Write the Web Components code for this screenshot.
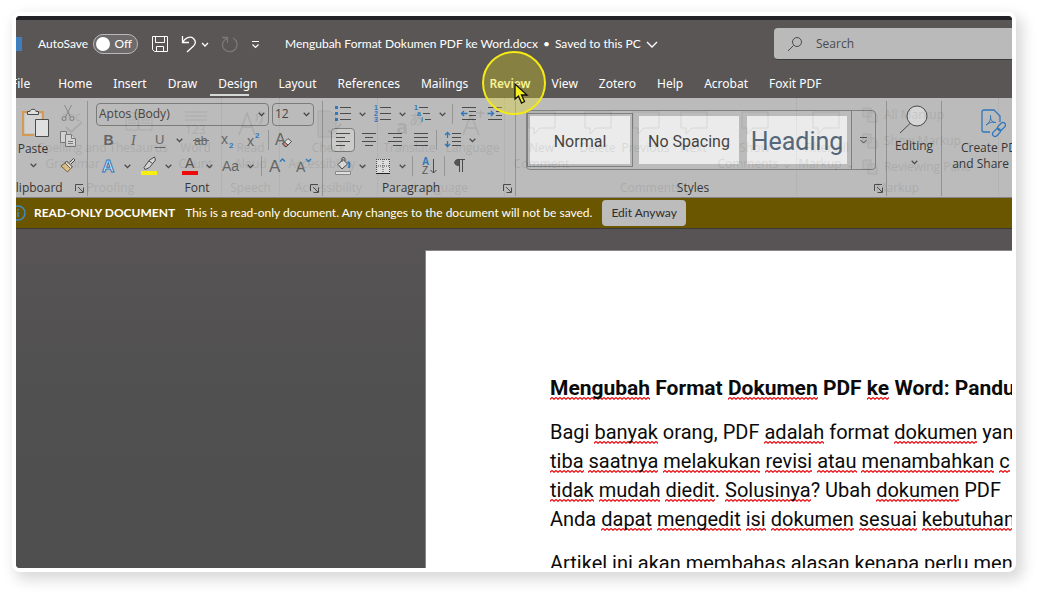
<!DOCTYPE html>
<html lang="id">
<head>
<meta charset="utf-8">
<title>Mengubah Format Dokumen PDF ke Word.docx</title>
<style>
  body {
    margin: 0;
    background: #fff;
    font-family: "Open Sans", "Noto Sans", sans-serif;
    font-size: 12px;
    line-height: 16px;
  }
</style>
</head>
<body>
<word-window></word-window>

<script>
// ---------- icons ----------
const BLUE = "#2f78bd";
const INK = "#4c4b4b";

const svg = (w, h, body) =>
  `<svg width="${w}" height="${h}" viewBox="0 0 ${w} ${h}" fill="none" stroke="${INK}" aria-hidden="true">${body}</svg>`;

const lines = (list) =>
  `<path d="${list.map(([x1, x2, y]) => `M${x1} ${y}H${x2}`).join("")}"/>`;

const letter = (x, y, size, fill, text, extra = "") =>
  `<text x="${x}" y="${y}" font-size="${size}" fill="${fill}" stroke="none" ${extra}>${text}</text>`;

const icons = {
  caret: svg(7, 5, `<path d="M.7 .8L3.5 3.6L6.3 .8" stroke-width="1.3"/>`),
  paste: svg(36, 34, `<g transform="translate(6 2)">
    <path d="M7 5H2V28H13M17 5H22V12" stroke="#d59a52" stroke-width="2"/>
    <path d="M3.500 6.500H20.500V26.500H3.500Z" fill="#d2d2d2" stroke="none"/>
    <path d="M6.500 7.500V4.500H9C9 1.500 15 1.500 15 4.500H17.500V7.500Z" fill="#e0e0e0"/>
    <path d="M14.500 12.500H27.500V29.500H14.500Z" fill="#e0e0e0"/></g>`),
  cut: svg(20, 20, `<g stroke="#888"><path d="M6.500 2L12.500 14M13.500 2L7.500 14"/><circle cx="6" cy="15.500" r="2"/><circle cx="14" cy="15.500" r="2"/></g>`),
  copy: svg(20, 20, `<g stroke="#7a7a7a" fill="#d2d2d2"><path d="M2.500 2.500H8.500V13.500H2.500Z"/><path d="M7.500 5.500H13.500L17.500 9.500V17.500H7.500Z"/><path d="M13.500 5.500V9.500H17.500"/><path d="M10 12.500H15M10 14.500H15" /></g>`),
  painter: svg(20, 20, `<path d="M11.500 7.500L15.500 3.500L17 5L13 9" fill="#ddd"/><path d="M8.500 6L14.500 12L12.500 13.500L7 8Z" fill="#ddd"/><path d="M7 8L3 11L9.500 17L12.500 13.500Z" fill="#dcc08c" stroke="#7d6338"/>`),
  bold: svg(22, 22, letter(6.5, 16, 14, "#666", "B", 'font-weight="700"')),
  italic: svg(22, 22, letter(8, 16, 14, "#666", "I", 'font-style="italic" font-family="Liberation Serif, serif"')),
  underline: svg(22, 22, letter(6, 15, 13, "#666", "U") + `<path d="M5.500 18.500H16.500" stroke="#666"/>`),
  strike: svg(22, 22, letter(4, 16, 12, "#666", "ab") + `<path d="M3 11.500H19" stroke="#666"/>`),
  sub: svg(22, 22, letter(5, 15, 14, "#666", "x") + letter(13, 19, 8, BLUE, "2", 'font-weight="700"')),
  sup: svg(22, 22, letter(5, 17, 14, "#666", "x") + letter(13, 9, 8, BLUE, "2", 'font-weight="700"')),
  clear: svg(22, 22, letter(1, 16, 16, "#666", "A") + `<path d="M8.500 15L14 9.500L17.500 12.500L12 18Z" fill="#e2e2e2"/><path d="M8.500 15L10.500 13L14 16L12 18Z" fill="#c88"/>`),
  effects: svg(22, 22, `<text x="5" y="17" font-size="17" font-weight="700" fill="#dfe6ec" stroke="${BLUE}">A</text>`),
  highlight: svg(22, 22, `<path d="M6 12.500L11.500 5L16.500 2L17.500 5L11.500 12.500L7 14.500Z" fill="#d5d5d5"/><path d="M11 6L14.500 8.500"/><path d="M3 16H19V20H3Z" fill="#f8ee10" stroke="none"/>`),
  color: svg(22, 22, letter(6, 13, 14, "#555", "A") + `<path d="M3 16H19V20H3Z" fill="#ee0a0a" stroke="none"/>`),
  changeCase: svg(22, 22, letter(2, 16, 14, "#666", "Aa")),
  grow: svg(22, 22, letter(2, 17, 17, "#666", "A") + `<path d="M13 6.500L15.500 4L18 6.500" stroke="${BLUE}" stroke-width="1.400"/>`),
  shrink: svg(22, 22, letter(3, 17, 14, "#666", "A") + `<path d="M13 4L15.500 6.500L18 4" stroke="${BLUE}" stroke-width="1.400"/>`),
  bullets: svg(22, 22, `<path d="M3 3H6V6H3ZM3 9H6V12H3ZM3 15H6V18H3Z" fill="${BLUE}" stroke="none"/>` + lines([[8, 19, 4.5], [8, 19, 10.5], [8, 19, 16.5]])),
  numbers: svg(22, 22, letter(2, 7, 7, BLUE, "1", 'font-weight="700"') + letter(2, 13, 7, BLUE, "2", 'font-weight="700"') + letter(2, 19, 7, BLUE, "3", 'font-weight="700"') + lines([[8, 19, 4.5], [8, 19, 10.5], [8, 19, 16.5]])),
  multilevel: svg(22, 22, letter(2, 7, 7, BLUE, "1", 'font-weight="700"') + letter(5, 13, 7, BLUE, "a", 'font-weight="700"') + letter(9, 19, 7, BLUE, "i", 'font-weight="700"') + lines([[7, 16, 4.5], [11, 18, 10.5], [13, 19, 16.5]])),
  outdent: svg(22, 22, lines([[4, 18, 4.5], [11, 18, 8.5], [11, 18, 12.5], [4, 18, 16.5]]) + `<path d="M9.500 10.500H3.500M6 8L3.500 10.500L6 13" stroke="${BLUE}" stroke-width="1.300"/>`),
  indent: svg(22, 22, lines([[4, 18, 4.5], [12, 18, 8.5], [12, 18, 12.5], [4, 18, 16.5]]) + `<path d="M3.500 10.500H9.500M7 8L9.500 10.500L7 13" stroke="${BLUE}" stroke-width="1.300"/>`),
  left: svg(22, 22, lines([[4, 18, 4.5], [4, 13, 8.5], [4, 18, 12.5], [4, 13, 16.5]])),
  center: svg(22, 22, lines([[4, 18, 4.5], [7, 15, 8.5], [4, 18, 12.5], [7, 15, 16.5]])),
  right: svg(22, 22, lines([[4, 18, 4.5], [9, 18, 8.5], [4, 18, 12.5], [9, 18, 16.5]])),
  justify: svg(22, 22, lines([[4, 18, 4.5], [4, 18, 8.5], [4, 18, 12.5], [4, 18, 16.5]])),
  spacing: svg(22, 22, lines([[10, 19, 4.5], [10, 19, 8.5], [10, 19, 12.5], [10, 19, 16.5]]) + `<path d="M5.500 4V9M5.500 12V17M3 6L5.500 3.500L8 6M3 15L5.500 17.500L8 15" stroke="${BLUE}" stroke-width="1.300"/>`),
  shading: svg(22, 22, `<path d="M6 9.500L11 4.500L15.500 9L10 14Z" fill="#ddd"/><path d="M10 7V3.500C10 2 13 2 13 4V6"/><path d="M16 7C18 8 17.500 11 17 13" stroke="${BLUE}" stroke-width="2"/><path d="M3.500 16.500H18.500V19.500H3.500Z" fill="#dedede" stroke="#888"/>`),
  borders: svg(22, 22, `<path d="M4 4H18V18H4Z" fill="#dcdcdc" stroke="none"/><path d="M4 4.500H18M4.500 4V18M17.500 4V18M11 4V18M4 11H18" stroke-dasharray="1 1"/><path d="M4 18.500H18" stroke="#222"/>`),
  sort: svg(22, 22, letter(4, 10, 10, BLUE, "A", 'font-weight="700"') + letter(4, 19, 10, "#555", "Z") + `<path d="M15.500 4V18M12.500 15L15.500 18L18.500 15"/>`),
  pilcrow: svg(22, 22, `<path d="M9.500 17V4.500M12.500 17V4.500M7 4.500H15"/><path d="M9.500 4.500C3 4 3 11 9.500 10.500Z" fill="#555"/>`),
  launcher: svg(9, 9, `<path d="M.5 7V.5H8M3 3L8 8M8.500 3.500V8.500H3.500"/>`),
  more: svg(9, 7, `<path d="M1 .5H8M1.500 3L4.500 6L7.500 3"/>`),
  magnifier: svg(30, 32, `<circle cx="18" cy="12" r="10" fill="#d6d6d6"/><path d="M11 19.500L1 29"/>`),
  acrobat: svg(28, 30, `<g stroke="${BLUE}" stroke-width="1.300"><path d="M12 24H6Q4 24 4 22V4Q4 2 6 2H16L22 8V14"/><path d="M8 17C12 15 13 10 12.500 7.500C12 12 15 15 18 14.500C14 13.500 11 14.500 8 17Z" stroke-width="1"/><rect x="19" y="16" width="9" height="5" rx="2.500" transform="rotate(-45 23.500 18.500)"/><rect x="14" y="22" width="9" height="5" rx="2.500" transform="rotate(-45 18.500 24.500)"/></g>`),
  save: svg(18, 18, `<g stroke="#fff"><path d="M1.500 1.500H16.500V16.500H3.500L1.500 14.500Z"/><path d="M4.500 1.500V7.500H13.500V1.500M5.500 16.500V11.500H12.500V16.500"/></g>`),
  undo: svg(16, 18, `<path d="M1.500 1V7.500H8M1.500 7.500C4 3 9 .5 12.500 3.500C15.500 6.500 14.500 9 12.500 11L6 17" stroke="#fff" stroke-width="1.300"/>`),
  redo: svg(18, 18, `<path d="M1 2.500H6.500V8M6 3.500C1 6 0 11 3.500 14.500C7 18 12 17 14.500 14C17.500 10 16 5 12 3" stroke="#77787b" stroke-width="1.300"/>`),
  whiteCaret: svg(8, 5, `<path d="M1 1L4 4L7 1" stroke="#fff" stroke-width="1.300"/>`),
  titleCaret: svg(12, 7, `<path d="M1 1L6 6L11 1" stroke="#fff" stroke-width="1.300"/>`),
  customize: svg(9, 9, `<path d="M1 1.500H8M1.500 4.500L4.500 7.500L7.500 4.500" stroke="#fff" stroke-width="1.200"/>`),
  search: svg(16, 16, `<circle cx="10" cy="6" r="4.500"/><path d="M6.500 9.500L1 15"/>`),
  info: svg(16, 16, `<circle cx="8" cy="8" r="7" stroke="#3f8bd0" stroke-width="1.400"/><path d="M8 7V12M8 4V5.500" stroke="#3f8bd0" stroke-width="1.600"/>`),
  pointer: svg(15, 22, `<path d="M1 1V16L4.500 13L7.500 20L10.500 18.500L7.500 12H13Z" fill="#f6ef1d" stroke="#111" stroke-width="1.300"/>`),
  abc: svg(26, 26, letter(1, 11, 12, "#000", "abc") + `<path d="M6 17L11 22L22 12" stroke="#000" stroke-width="2"/>`),
  book: svg(28, 26, `<path d="M1 3H13V20H1ZM14 3H27V20H14ZM3 7H11M3 10H11M3 13H11M16 7H25M16 10H25M16 13H25" stroke="#000"/>`),
  count: svg(28, 26, `<path d="M3 2H25M3 6H25M3 10H25" stroke="#000"/>` + letter(3, 24, 12, "#000", "123")),
  aloud: svg(28, 26, `<path d="M2 25L10 3L18 25M5 17H15M19 4Q22 7 19 11M23 1Q28 7 23 14" stroke="#000" stroke-width="1.400"/>`),
  language: svg(28, 26, `<path d="M4 25L12 5L20 25M7 18H17M17 3H26M21.500 0V8" stroke="#000" stroke-width="1.400"/>`),
  check: svg(26, 28, `<path d="M2 1H14L20 7V27H2Z" fill="#000" fill-opacity=".3" stroke="#000"/><path d="M12 20L16 24L25 14" stroke="#000" stroke-width="2"/>`),
  translate: svg(30, 28, letter(1, 24, 20, "#000", "a", 'font-weight="700"') + letter(14, 14, 14, "#000", "あ", 'font-family="Noto Sans CJK JP"')),
  bubble: svg(30, 26, `<path d="M2 2H28V18H13L7 24V18H2Z" stroke="#000"/>`),
  page: svg(16, 16, `<path d="M1 1H9V10H1ZM6 5H12L15 8V15H6Z" stroke="#000" fill="#000" fill-opacity=".2"/>`),
};

// ---------- one icon ----------
class UiIcon extends HTMLElement {
  connectedCallback() {
    this.attachShadow({ mode: "open" }).innerHTML = `
      <style>
        :host { display: inline-flex; flex: none; }
        svg { display: block; }
      </style>
      ${icons[this.getAttribute("name")]}
    `;
  }
}
customElements.define("ui-icon", UiIcon);

// ---------- small ribbon button, with an optional menu arrow ----------
class RibbonTool extends HTMLElement {
  connectedCallback() {
    const label = this.getAttribute("label");
    const menu = this.hasAttribute("menu")
      ? `<button class="menu" aria-label="${label} options"><ui-icon name="caret"></ui-icon></button>`
      : "";
    this.attachShadow({ mode: "open" }).innerHTML = `
      <style>
        :host { display: inline-flex; flex: none; align-items: center; }
        button {
          display: flex;
          align-items: center;
          justify-content: center;
          box-sizing: border-box;
          width: 26px;
          height: 24px;
          padding: 0;
          border: 1px solid transparent;
          border-radius: 4px;
          background: none;
        }
        .menu { width: 14px; padding-right: 2px; }
        :host([pressed]) button { width: 24px; margin: 0 1px; background: #cbcbc9; border-color: #7e7e7e; }
      </style>
      <button aria-label="${label}"><ui-icon name="${this.getAttribute("icon")}"></ui-icon></button>
      ${menu}
    `;
  }
}
customElements.define("ribbon-tool", RibbonTool);

// ---------- tall ribbon button: icon over its text ----------
class RibbonBigTool extends HTMLElement {
  connectedCallback() {
    this.attachShadow({ mode: "open" }).innerHTML = `
      <style>
        :host { display: block; flex: none; }
        button {
          display: flex;
          flex-direction: column;
          align-items: center;
          gap: 2px;
          width: 100%;
          padding: 0;
          border: 0;
          background: none;
          color: #363636;
          font: inherit;
          white-space: nowrap;
        }
        .caret { padding-top: 4px; }
      </style>
      <button>
        <ui-icon name="${this.getAttribute("icon")}"></ui-icon>
        <span><slot></slot></span>
        ${this.hasAttribute("menu") ? '<ui-icon class="caret" name="caret"></ui-icon>' : ""}
      </button>
    `;
  }
}
customElements.define("ribbon-big-tool", RibbonBigTool);

// ---------- group of tools with its caption ----------
class RibbonGroup extends HTMLElement {
  connectedCallback() {
    const label = this.getAttribute("label") || "";
    const launcher = this.hasAttribute("launcher")
      ? `<button aria-label="${label} settings"><ui-icon name="launcher"></ui-icon></button>`
      : "";
    this.attachShadow({ mode: "open" }).innerHTML = `
      <style>
        :host {
          display: flex;
          flex-direction: column;
          flex: none;
          box-sizing: border-box;
          border-right: 1px solid #929292;
        }
        :host([last]) { border-right: 0; }
        .tools { flex: 1; }
        footer { display: flex; height: 16px; align-items: center; }
        footer span { flex: 1; text-align: center; }
        footer button { width: 16px; padding: 0; border: 0; background: none; }
      </style>
      <div class="tools"><slot></slot></div>
      <footer><span>${label}</span>${launcher}</footer>
    `;
  }
}
customElements.define("ribbon-group", RibbonGroup);

// ---------- title bar ----------
class TitleBar extends HTMLElement {
  connectedCallback() {
    this.attachShadow({ mode: "open" }).innerHTML = `
      <style>
        :host {
          display: grid;
          grid-template-columns: 758px 1fr;
          align-items: center;
          height: 48px;
          border-top: 4px solid #222126;
          color: #fff;
        }
        .left { display: flex; align-items: center; font-family: Lato, "Open Sans", sans-serif; }
        .app { width: 6px; height: 14px; margin-right: 16px; background: #3f7fc0; }
        .switch { display: flex; align-items: center; justify-content: space-between; width: 100px; margin-right: 13px; }
        .track {
          display: flex;
          align-items: center;
          justify-content: space-between;
          box-sizing: border-box;
          width: 45px;
          height: 20px;
          padding: 0 5px 0 2px;
          border: 1px solid #b9b9b9;
          border-radius: 10px;
          background: #6c6a6a;
        }
        .track input {
          appearance: none;
          width: 14px;
          height: 14px;
          margin: 0;
          border-radius: 50%;
          background: #fff;
        }
        button { display: flex; padding: 0; border: 0; background: none; color: inherit; font: inherit; }
        .quick { display: flex; align-items: center; gap: 12px; width: 134px; }
        .undo { display: flex; align-items: center; gap: 4px; }
        .name { display: flex; align-items: center; gap: 5px; white-space: nowrap; }
        .search {
          display: flex;
          align-items: center;
          gap: 13px;
          height: 32px;
          padding-left: 13px;
          border-radius: 4px 0 0 4px;
          border-bottom: 1px solid #3c3c3c;
          box-sizing: border-box;
          background: #bababa;
        }
        .search input { flex: 1; min-width: 0; border: 0; padding: 0; outline: 0; background: none; font: inherit; color: #444; }
        .search input::placeholder { color: #4b4b4b; opacity: 1; }
      </style>
      <div class="left">
        <span class="app"></span>
        <label class="switch">AutoSave
          <span class="track"><input type="checkbox" role="switch"><span>Off</span></span>
        </label>
        <div class="quick">
          <button aria-label="Save"><ui-icon name="save"></ui-icon></button>
          <div class="undo">
            <button aria-label="Undo"><ui-icon name="undo"></ui-icon></button>
            <button aria-label="Undo list"><ui-icon name="whiteCaret"></ui-icon></button>
          </div>
          <button aria-label="Redo"><ui-icon name="redo"></ui-icon></button>
          <button aria-label="Customize"><ui-icon name="customize"></ui-icon></button>
        </div>
        <button class="name"><span>Mengubah Format Dokumen PDF ke Word.docx</span><span>•</span><span>Saved to this PC</span><ui-icon name="titleCaret"></ui-icon></button>
      </div>
      <label class="search">
        <ui-icon name="search"></ui-icon>
        <input type="text" placeholder="Search" aria-label="Search">
      </label>
    `;
  }
}
customElements.define("title-bar", TitleBar);

// ---------- tab row ----------
class RibbonTabs extends HTMLElement {
  connectedCallback() {
    const names = this.getAttribute("names").split("|");
    const active = this.getAttribute("active");
    const hover = this.getAttribute("hover");
    this.attachShadow({ mode: "open" }).innerHTML = `
      <style>
        :host { display: block; font-family: "Noto Sans", sans-serif; }
        nav { display: flex; gap: 21px; box-sizing: border-box; height: 30px; padding-top: 2px; margin-left: -5px; align-items: center; }
        a { position: relative; color: #fff; text-decoration: none; white-space: nowrap; }
        a:first-child { margin-right: 7px; }
        .active::after {
          content: "";
          position: absolute;
          left: -8px;
          right: 8px;
          bottom: -4px;
          height: 2px;
          background: #d5d9d8;
        }
        .hover { color: #fbf6c8; font-weight: 600; }
        .ring {
          position: absolute;
          left: 50%;
          top: 50%;
          width: 60px;
          height: 60px;
          margin: -33px 0 0 -28px;
          border: 2px solid #f3ea17;
          border-radius: 50%;
          background: rgba(240, 228, 20, .3);
          z-index: 2;
        }
        .ring ui-icon { position: absolute; left: 30px; top: 30px; }
      </style>
      <nav>
        ${names.map((n) => `<a href="#" class="${n === active ? "active" : n === hover ? "hover" : ""}">${n}${
          n === hover ? '<span class="ring"><ui-icon name="pointer"></ui-icon></span>' : ""}</a>`).join("")}
      </nav>
    `;
  }
}
customElements.define("ribbon-tabs", RibbonTabs);

// ---------- Review ribbon fading out on top of the Home one ----------
class FadingRibbon extends HTMLElement {
  connectedCallback() {
    const item = (w, icon, text) =>
      `<div class="item" style="width:${w}px"><ui-icon name="${icon}"></ui-icon><span>${text}</span></div>`;
    const group = (w, label, items) =>
      `<section style="width:${w}px"><div class="items">${items}</div><footer>${label}</footer></section>`;
    this.attachShadow({ mode: "open" }).innerHTML = `
      <style>
        :host {
          display: flex;
          position: absolute;
          inset: 0;
          padding-bottom: 1px;
          opacity: .08;
          color: #000;
          pointer-events: none;
          overflow: hidden;
        }
        section { display: flex; flex-direction: column; flex: none; box-sizing: border-box; border-right: 1px dotted #000; }
        .items { display: flex; flex: 1; justify-content: center; padding-top: 12px; }
        .item { display: flex; flex-direction: column; align-items: center; gap: 2px; text-align: center; white-space: nowrap; }
        .item ui-icon { height: 28px; }
        footer { height: 16px; text-align: center; }
        .list { display: flex; flex-direction: column; gap: 10px; padding: 0 24px 0 6px; margin-top: -3px; white-space: nowrap; }
        .list div { display: flex; gap: 6px; }
      </style>
      ${group(222, "Proofing",
        `<div class="item" style="width:38px"></div>` +
        item(66, "abc", "Spelling and<br>Grammar") + item(66, "book", "Thesaurus") + item(48, "count", "Word<br>Count"))}
      ${group(58, "Speech", item(58, "aloud", "Read<br>Aloud"))}
      ${group(98, "Accessibility", item(98, "check", "Check<br>Accessibility ⌄"))}
      ${group(127, "Language", item(63, "translate", "Translate") + item(63, "language", "Language"))}
      ${group(292, "Comments",
        item(64, "bubble", "New<br>Comment") + item(48, "bubble", "Delete") + item(48, "bubble", "Previous") +
        item(48, "bubble", "Next") + item(74, "bubble", "Show<br>Comments ⌄"))}
      ${group(202, "Markup", item(66, "bubble", "Filter All<br>Markup ⌄") +
        `<div class="list"><div><ui-icon name="page"></ui-icon>All Markup</div><div><ui-icon name="page"></ui-icon>Show Markup ⌄</div><div><ui-icon name="page"></ui-icon>Reviewing Pane</div></div>`)}
    `;
  }
}
customElements.define("fading-ribbon", FadingRibbon);

// ---------- style gallery ----------
class StyleGallery extends HTMLElement {
  connectedCallback() {
    this.attachShadow({ mode: "open" }).innerHTML = `
      <style>
        :host {
          display: flex;
          box-sizing: border-box;
          height: 60px;
          margin: 9px 10px 0;
          border: 1px solid #808080;
          border-radius: 4px;
        }
        .list { display: flex; flex: 1; gap: 4px; align-items: center; min-width: 0; overflow: hidden; }
        button { padding: 0; border: 0; font: inherit; background: none; }
        .list button {
          box-sizing: content-box;
          flex: none;
          width: 100px;
          height: 48px;
          border: 2px solid transparent;
          background: #ebebeb;
          background-clip: padding-box;
          font-family: Roboto, sans-serif;
          font-size: 16px;
          line-height: 30px;
          color: #47443f;
          white-space: nowrap;
        }
        .list .current { padding: 2px; background-clip: content-box; border: 1px solid #7c8080; }
        .list .heading { font-size: 25px; color: #55677a; }
        .list span { display: block; padding-top: 3px; }
        .more { width: 24px; border-left: 1px solid #808080; }
      </style>
      <div class="list">
        <button class="current"><span>Normal</span></button>
        <button><span>No Spacing</span></button>
        <button class="heading"><span>Heading</span></button>
      </div>
      <button class="more" aria-label="More styles"><ui-icon name="more"></ui-icon></button>
    `;
  }
}
customElements.define("style-gallery", StyleGallery);

// ---------- Home ribbon ----------
class HomeRibbon extends HTMLElement {
  connectedCallback() {
    const tool = (icon, label, flags = "") =>
      `<ribbon-tool icon="${icon}" label="${label}" ${flags}></ribbon-tool>`;
    const sep = `<span class="sep"></span>`;
    this.attachShadow({ mode: "open" }).innerHTML = `
      <style>
        :host {
          display: flex;
          position: relative;
          box-sizing: border-box;
          height: 100px;
          margin-left: -16px;
          padding: 3px 0 1px;
          border-bottom: 1px solid #858585;
          background: #bbb;
          color: #363636;
        }
        .clipboard { width: 88px; }
        .clipboard div.body { display: flex; justify-content: flex-end; gap: 4px; padding-right: 6px; }
        .clipboard ribbon-big-tool { width: 36px; padding-top: 4px; }
        .stack { display: flex; flex-direction: column; gap: 2px; width: 26px; }
        .font { width: 235px; }
        .paragraph { width: 193px; }
        .styles { width: 371px; }
        .editing { width: 55px; }
        .acrobat { width: 100px; }
        .editing ribbon-big-tool { padding-top: 3px; }
        .acrobat ribbon-big-tool { padding-top: 7px; }
        .row { display: flex; align-items: center; height: 26px; padding-left: 7px; }
        .font ribbon-tool[menu] { margin-right: 1px; }
        .sep { flex: none; box-sizing: border-box; width: 3px; height: 20px; margin-right: 3px; border-right: 1px solid #959595; }
        .combos { gap: 3px; padding-left: 8px; }
        select {
          appearance: none;
          box-sizing: border-box;
          height: 23px;
          padding: 0 2px;
          border: 1px solid #7b7b7b;
          border-radius: 4px;
          color: #4a4540;
          font: inherit;
          background: url('data:image/svg+xml,<svg xmlns="http://www.w3.org/2000/svg" width="7" height="5" fill="none" stroke="%23444" stroke-width="1.300"><path d="M.7 .8L3.500 3.600L6.300 .8"/></svg>') no-repeat right 3px center;
        }
        .face { width: 173px; }
        .size { width: 42px; }
      </style>
      <ribbon-group class="clipboard" label="Clipboard" launcher>
        <div class="body">
          <ribbon-big-tool icon="paste" menu>Paste</ribbon-big-tool>
          <div class="stack">${tool("cut", "Cut")}${tool("copy", "Copy")}${tool("painter", "Format Painter")}</div>
        </div>
      </ribbon-group>
      <ribbon-group class="font" label="Font" launcher>
        <div class="row combos">
          <select class="face" aria-label="Font"><option>Aptos (Body)</option></select>
          <select class="size" aria-label="Font size"><option>12</option></select>
        </div>
        <div class="row">
          ${tool("bold", "Bold")}${tool("italic", "Italic")}${tool("underline", "Underline", "menu")}${tool("strike", "Strikethrough")}${tool("sub", "Subscript")}${tool("sup", "Superscript")}${sep}${tool("clear", "Clear formatting")}
        </div>
        <div class="row">
          ${tool("effects", "Text effects", "menu")}${tool("highlight", "Highlight", "menu")}${tool("color", "Font color", "menu")}${tool("changeCase", "Change case", "menu")}${sep}${tool("grow", "Grow font")}${tool("shrink", "Shrink font")}
        </div>
      </ribbon-group>
      <ribbon-group class="paragraph" label="Paragraph" launcher>
        <div class="row">
          ${tool("bullets", "Bullets", "menu")}${tool("numbers", "Numbering", "menu")}${tool("multilevel", "Multilevel list", "menu")}${sep}${tool("outdent", "Decrease indent")}${tool("indent", "Increase indent")}
        </div>
        <div class="row">
          ${tool("left", "Align left", "pressed")}${tool("center", "Center")}${tool("right", "Align right")}${tool("justify", "Justify")}${sep}${tool("spacing", "Line spacing", "menu")}
        </div>
        <div class="row">
          ${tool("shading", "Shading", "menu")}${tool("borders", "Borders", "menu")}${sep}${tool("sort", "Sort")}${sep}${tool("pilcrow", "Show marks")}
        </div>
      </ribbon-group>
      <ribbon-group class="styles" label="Styles" launcher>
        <style-gallery></style-gallery>
      </ribbon-group>
      <ribbon-group class="editing">
        <ribbon-big-tool icon="magnifier" menu>Editing</ribbon-big-tool>
      </ribbon-group>
      <ribbon-group class="acrobat" last>
        <ribbon-big-tool icon="acrobat">Create PDF<br>and Share link</ribbon-big-tool>
      </ribbon-group>
      <fading-ribbon aria-hidden="true"></fading-ribbon>
    `;
  }
}
customElements.define("home-ribbon", HomeRibbon);

// ---------- yellow message bar ----------
class MessageBar extends HTMLElement {
  connectedCallback() {
    this.attachShadow({ mode: "open" }).innerHTML = `
      <style>
        :host {
          display: flex;
          align-items: center;
          gap: 10px;
          box-sizing: border-box;
          height: 31px;
          border-bottom: 1px solid #3c3935;
          background: #6b5600;
          color: #fff;
          font-family: Lato, "Open Sans", sans-serif;
          white-space: nowrap;
        }
        ui-icon { margin: 0 -2px 0 -6px; }
        b { font-weight: 700; }
        button {
          height: 26px;
          padding: 0 9px;
          border: 0;
          border-radius: 4px;
          background: #bcbcbc;
          color: #2d2d2d;
          font: inherit;
        }
      </style>
      <ui-icon name="info"></ui-icon>
      <b>${this.getAttribute("heading")}</b>
      <span><slot></slot></span>
      <button>${this.getAttribute("action")}</button>
    `;
  }
}
customElements.define("message-bar", MessageBar);

// ---------- document page ----------
class DocumentPage extends HTMLElement {
  connectedCallback() {
    this.attachShadow({ mode: "open" }).innerHTML = `
      <style>
        :host {
          display: block;
          box-sizing: border-box;
          margin: 21px 0 0 409px;
          padding: 123px 0 0 124px;
          border: 1px solid #8a8789;
          border-width: 1px 0 0 1px;
          background: #fff;
          color: #0b0b0b;
          font-family: Roboto, sans-serif;
          font-size: 20px;
          line-height: 29px;
          white-space: nowrap;
        }
        ::slotted(*) { margin: 0 0 15px; }
        ::slotted(h1) { font-size: 21px; }
      </style>
      <slot></slot>
    `;
  }
}
customElements.define("document-page", DocumentPage);

// ---------- whole window ----------
class WordWindow extends HTMLElement {
  connectedCallback() {
    this.attachShadow({ mode: "open" }).innerHTML = `
      <style>
        :host {
          display: block;
          box-sizing: border-box;
          height: calc(100vh - 36px);
          margin: 12px 24px 24px 12px;
          padding: 4px;
          border-radius: 8px;
          background: #fff;
          box-shadow: 5px 6px 14px 2px rgba(0, 0, 0, .15);
        }
        .window {
          display: flex;
          flex-direction: column;
          height: 100%;
          overflow: hidden;
          border-radius: 4px;
          background: #5a5656;
        }
        .canvas { display: flex; flex: 1; flex-direction: column; overflow: hidden; background: linear-gradient(#585456, #505050 50%, #4f4f4f); }
        document-page { flex: 1; }
        /* spelling squiggle */
        u {
          text-decoration: none;
          background: url('data:image/svg+xml,<svg xmlns="http://www.w3.org/2000/svg" width="4" height="3" fill="none" stroke="%23e8161b" stroke-width="1.300"><path d="M-1 3L0 2.200L2 .6L4 2.200L5 3"/></svg>') repeat-x left bottom;
        }
      </style>
      <div class="window">
        <title-bar></title-bar>
        <ribbon-tabs names="File|Home|Insert|Draw|Design|Layout|References|Mailings|Review|View|Zotero|Help|Acrobat|Foxit PDF" active="Design" hover="Review"></ribbon-tabs>
        <home-ribbon></home-ribbon>
        <message-bar heading="READ-ONLY DOCUMENT" action="Edit Anyway">This is a read-only document. Any changes to the document will not be saved.</message-bar>
        <main class="canvas">
          <document-page>
            <h1><u>Mengubah</u> Format <u>Dokumen</u> PDF <u>ke</u> Word: Pandu</h1>
            <p>Bagi <u>banyak</u> orang, PDF <u>adalah</u> format <u>dokumen</u> yang<br>
              <u>tiba</u> <u>saatnya</u> <u>melakukan</u> <u>revisi</u> <u>atau</u> <u>menambahkan</u> <u>c</u><br>
              <u>tidak</u> <u>mudah</u> <u>diedit</u>. <u>Solusinya</u>? Ubah <u>dokumen</u> PDF<br>
              Anda <u>dapat</u> <u>mengedit</u> <u>isi</u> <u>dokumen</u> <u>sesuai</u> <u>kebutuhan</u></p>
            <p>Artikel ini akan membahas alasan kenapa perlu men</p>
          </document-page>
        </main>
      </div>
    `;
  }
}
customElements.define("word-window", WordWindow);
</script>
</body>
</html>
